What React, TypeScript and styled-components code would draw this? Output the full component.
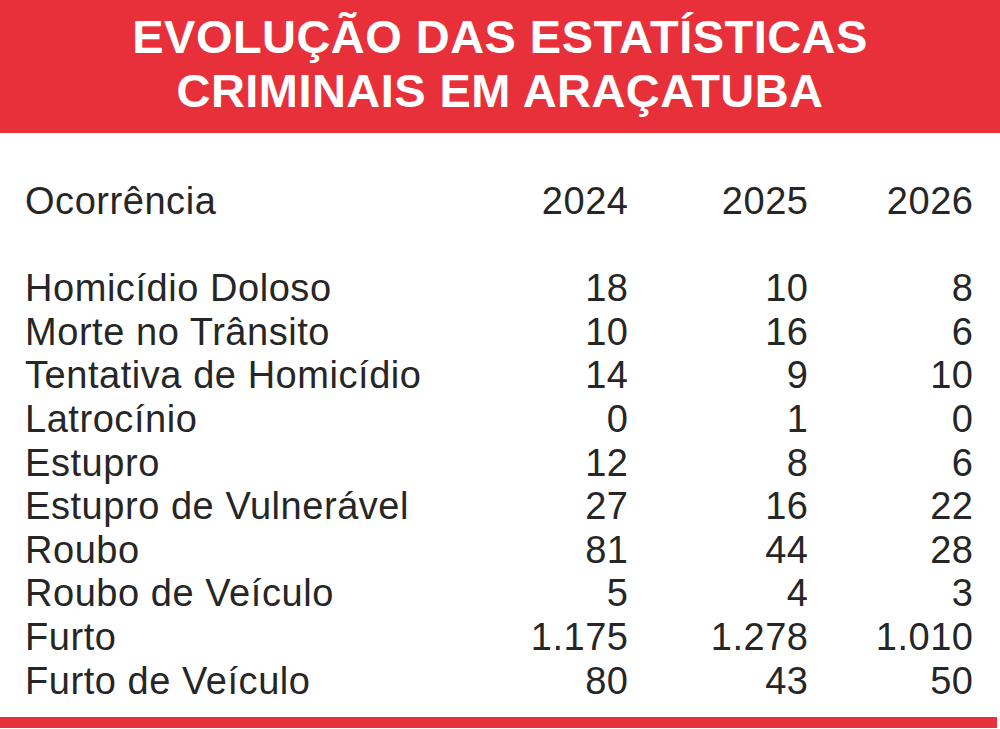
import React from 'react';
import styled, { createGlobalStyle } from 'styled-components';

const GlobalStyle = createGlobalStyle`
  html, body {
    margin: 0;
    padding: 0;
    background: #ffffff;
  }
  body {
    font-family: 'Liberation Sans', Arial, Helvetica, sans-serif;
  }
`;

const Page = styled.div`
  width: 1000px;
  height: 729px;
  display: flex;
  flex-direction: column;
  background: #ffffff;
  overflow: hidden;
`;

const Header = styled.header`
  height: 133px;
  box-sizing: border-box;
  padding-top: 10px;
  background: #e8303a;
  color: #ffffff;
  text-align: center;
`;

const TitleLine = styled.div`
  font-size: 47px;
  line-height: 54px;
  font-weight: 700;
  letter-spacing: 0.45px;
  white-space: nowrap;
`;

const Table = styled.div`
  flex: 1;
  box-sizing: border-box;
  padding: 47px 27px 0 25px;
  display: grid;
  grid-template-columns: 1fr 180px 180px 165px;
  grid-auto-rows: 43.6px;
  align-content: start;
  color: #262626;
  font-size: 38px;
  line-height: 43.6px;
  letter-spacing: 0.55px;
`;

const Spacer = styled.div`
  grid-column: 1 / -1;
  height: 44px;
`;

const Cell = styled.div<{ $num?: boolean }>`
  white-space: nowrap;
  text-align: ${(p) => (p.$num ? 'right' : 'left')};
  margin-right: ${(p) => (p.$num ? '-0.55px' : '0')};
`;

const Bar = styled.div`
  height: 11px;
  margin: 0 3px 1px 0;
  background: #e8303a;
`;

const rows: [string, string, string, string][] = [
  ['Homicídio Doloso', '18', '10', '8'],
  ['Morte no Trânsito', '10', '16', '6'],
  ['Tentativa de Homicídio', '14', '9', '10'],
  ['Latrocínio', '0', '1', '0'],
  ['Estupro', '12', '8', '6'],
  ['Estupro de Vulnerável', '27', '16', '22'],
  ['Roubo', '81', '44', '28'],
  ['Roubo de Veículo', '5', '4', '3'],
  ['Furto', '1.175', '1.278', '1.010'],
  ['Furto de Veículo', '80', '43', '50'],
];

const App = () => {
  return (
    <Page>
      <GlobalStyle />
      <Header>
        <TitleLine>EVOLUÇÃO DAS ESTATÍSTICAS</TitleLine>
        <TitleLine>CRIMINAIS EM ARAÇATUBA</TitleLine>
      </Header>
      <Table>
        <Cell>Ocorrência</Cell>
        <Cell $num>2024</Cell>
        <Cell $num>2025</Cell>
        <Cell $num>2026</Cell>
        <Spacer />
        {rows.map((r) => (
          <React.Fragment key={r[0]}>
            <Cell>{r[0]}</Cell>
            <Cell $num>{r[1]}</Cell>
            <Cell $num>{r[2]}</Cell>
            <Cell $num>{r[3]}</Cell>
          </React.Fragment>
        ))}
      </Table>
      <Bar />
    </Page>
  );
};

export default App;
